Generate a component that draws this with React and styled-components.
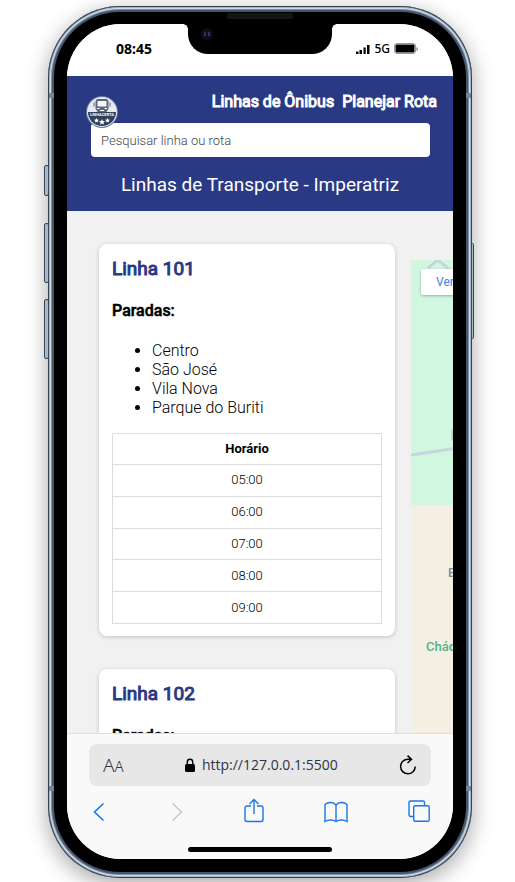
import React from 'react';
import styled, { createGlobalStyle } from 'styled-components';

const GlobalStyle = createGlobalStyle`
  *, *::before, *::after { box-sizing: border-box; }
  body {
    margin: 0;
    background: #fff;
    font-family: Roboto, "Liberation Sans", sans-serif;
    color: #000;
  }
`;

const Stage = styled.div`
  display: flex;
  height: 100vh;
  min-height: 600px;
  padding: 6px 43px 4px 48px;
  overflow: hidden;
`;

const Phone = styled.div`
  position: relative;
  flex: 1;
  display: flex;
  min-width: 0;
  padding: 18px 19px 19px;
  border-radius: 72px;
  background: #000;
  box-shadow:
    inset 0 0 0 1px #343f4c,
    inset 0 0 0 2px #a9b8c8,
    inset 0 0 0 3px #d0dceb,
    inset 0 0 0 4px #7d8ea1,
    inset 0 0 0 6px #45556a,
    0 6px 20px 2px rgba(0, 0, 0, 0.3);
`;

const SideButton = styled.span`
  position: absolute;
  ${({ $side }) => $side}: ${({ $side }) => ($side === 'left' ? '-4px' : '-2px')};
  top: ${({ $top }) => $top}px;
  width: ${({ $side }) => ($side === 'left' ? 5 : 3)}px;
  height: ${({ $length }) => $length}px;
  border: 1px solid #3b4654;
  border-radius: 2px;
  background: #a9b9ca;
`;

const AntennaBand = styled.span`
  position: absolute;
  ${({ $side }) => $side}: 1px;
  ${({ $edge }) => $edge}: 87px;
  width: 5px;
  height: 5px;
  background: #76859f;
`;

const Speaker = styled.span`
  position: absolute;
  top: 7px;
  left: 50%;
  width: 66px;
  height: 6px;
  margin-left: -33px;
  border-radius: 3px;
  background: #151515;
`;

const Notch = styled.div`
  position: absolute;
  top: 17px;
  left: 50%;
  width: 144px;
  height: 31px;
  margin-left: -72px;
  border-radius: 0 0 20px 20px;
  background: #000;

  &::before, &::after {
    content: "";
    position: absolute;
    top: 1px;
    width: 4px;
    height: 4px;
  }
  &::before {
    left: -4px;
    background: radial-gradient(circle at 0 100%, transparent 3px, #000 4px);
  }
  &::after {
    right: -4px;
    background: radial-gradient(circle at 100% 100%, transparent 3px, #000 4px);
  }
`;

const Camera = styled.svg`
  position: absolute;
  top: 3px;
  left: 11px;
`;

const Screen = styled.div`
  flex: 1;
  display: flex;
  flex-direction: column;
  min-width: 0;
  overflow: hidden;
  border-radius: 54px;
  background: #f1f1f1;
`;

const StatusBar = styled.div`
  display: flex;
  justify-content: space-between;
  align-items: center;
  flex: none;
  height: 52px;
  padding: 0 35px 2px 49px;
  background: #fff;
  font-family: "Noto Sans", "Open Sans", sans-serif;
`;

const Clock = styled.time`
  font-size: 14px;
  font-weight: 700;
  line-height: 20px;
`;

const Signal = styled.div`
  display: flex;
  align-items: center;
  gap: 4px;
  font-size: 12px;
  font-weight: 500;
  line-height: 20px;
`;

const SiteHeader = styled.header`
  flex: none;
  padding-top: 16px;
  padding-bottom: 14px;
  background: #2a3984;
  color: #fff;
`;

const HeaderRow = styled.div`
  display: flex;
  justify-content: space-between;
  align-items: flex-start;
  padding: 0 16px 0 19px;
`;

const Logo = styled.svg`
  position: relative;
  z-index: 1;
  flex: none;
  margin: 4px 0 -5px;
`;

const MainNav = styled.nav`
  display: flex;
  gap: 8px;
`;

const NavLink = styled.a`
  color: #fff;
  font-size: 16px;
  font-weight: 400;
  line-height: 20px;
  text-decoration: none;
  white-space: nowrap;
  -webkit-text-stroke: 1px #fff;
`;

const SearchForm = styled.form`
  display: flex;
  padding: 0 23px 0 24px;
`;

const SearchInput = styled.input`
  flex: 1;
  min-width: 0;
  height: 34px;
  padding: 0 10px;
  border: 0;
  border-radius: 4px;
  background: #fff;
  font: 300 13px Roboto, sans-serif;

  &::placeholder { color: #444; opacity: 1; }
`;

const PageTitle = styled.h1`
  margin: 16px 0 0;
  font-size: 19px;
  font-weight: 400;
  line-height: 24px;
  text-align: center;
`;

const Content = styled.main`
  flex: 1;
  display: flex;
  gap: 16px;
  min-height: 0;
  padding: 33px 0 0 32px;
  overflow: hidden;
`;

const LineList = styled.div`
  flex: none;
  width: calc(100% - 58px);
  display: flex;
  flex-direction: column;
  gap: 33px;
`;

const Card = styled.section`
  flex: none;
  padding: 13px 13px 12px;
  border-radius: 8px;
  background: #fff;
  box-shadow: 0 1px 4px rgba(0, 0, 0, 0.2);
`;

const LineName = styled.h2`
  margin: 0;
  color: #2a3984;
  font-size: 19px;
  font-weight: 400;
  line-height: 24px;
  -webkit-text-stroke: 1px #2a3984;
`;

const StopsTitle = styled.h3`
  margin: 20px 0 0;
  font-size: 16px;
  font-weight: 500;
  line-height: 20px;
  -webkit-text-stroke: 0.5px #000;
`;

const Stops = styled.ul`
  margin: 20px 0 16px;
  padding-left: 40px;
  font-size: 16px;
  font-weight: 300;
  line-height: 19px;
`;

const Schedule = styled.table`
  width: 100%;
  height: 191px;
  border-collapse: collapse;
  font-size: 13px;

  th, td {
    padding: 7px;
    border: 1px solid #ddd;
    line-height: 16px;
    text-align: center;
  }
  td { font-weight: 300; }
`;

const MapPanel = styled.aside`
  position: relative;
  flex: none;
  width: 296px;
  height: 600px;
  margin-top: 16px;
  overflow: hidden;
  background: #f3efe3;
`;

const MapDrawing = styled.svg`
  display: block;
`;

const MapLink = styled.a`
  position: absolute;
  top: 9px;
  left: 10px;
  padding: 3px 15px;
  border-radius: 2px;
  background: #fff;
  box-shadow: 0 1px 3px rgba(0, 0, 0, 0.3);
  color: #3b82e8;
  font-size: 12px;
  line-height: 20px;
  text-decoration: none;
  white-space: nowrap;
`;

const BrowserBar = styled.footer`
  flex: none;
  padding: 10px 22px 7px;
  border-top: 1px solid #dedede;
  background: #f9f9f9;
`;

const AddressBar = styled.div`
  display: flex;
  justify-content: space-between;
  align-items: center;
  height: 42px;
  padding: 0 14px;
  border-radius: 8px;
  background: #e7e7e7;
  color: #2d3442;
  font-family: "Open Sans", "Noto Sans", sans-serif;
  font-weight: 400;
`;

const IconButton = styled.button`
  display: flex;
  align-items: center;
  padding: 0;
  border: 0;
  background: none;
  color: inherit;
  font: inherit;
  cursor: pointer;
`;

const ChevronButton = styled(IconButton)`
  width: 18px;
`;

const TextSize = styled(IconButton)`
  align-items: baseline;
  font-family: "Noto Sans", "Open Sans", sans-serif;
  font-size: 19px;
  font-weight: 300;
  small { font-size: 15px; }
`;

const Address = styled.div`
  display: flex;
  align-items: center;
  gap: 7px;
  font-size: 14px;
  font-weight: 400;
  line-height: 20px;
`;

const Toolbar = styled.nav`
  display: flex;
  justify-content: space-between;
  align-items: center;
  height: 28px;
  margin-top: 12px;
  padding: 0 1px 0 4px;
  color: #1877e6;
`;

const HomeIndicator = styled.div`
  width: 144px;
  height: 5px;
  margin: 21px auto 0;
  border-radius: 3px;
  background: #000;
`;

const LINES = [
  {
    name: 'Linha 101',
    stops: ['Centro', 'São José', 'Vila Nova', 'Parque do Buriti'],
    times: ['05:00', '06:00', '07:00', '08:00', '09:00'],
  },
  { name: 'Linha 102', stops: [], times: [] },
];

const BusLogo = () => (
  <Logo width="32" height="32" viewBox="0 0 32 32" role="img" aria-label="Linha Certa">
    <defs>
      <clipPath id="logo-disc"><circle cx="16" cy="16" r="14" /></clipPath>
    </defs>
    <circle cx="16" cy="16" r="16" fill="#6d7a9f" />
    <circle cx="16" cy="16" r="15" fill="#e6eaf1" />
    <path clipPath="url(#logo-disc)" d="M0 16h32v16H0z" fill="#33415f" />
    <path d="M11 3h10l1.500 2v7.500L20.500 16h-9l-2-3.500V5z" fill="#5a6680" />
    <path d="M11.500 5h9v5.500h-9z" fill="#f2f4f8" />
    <path d="M11 12.500h2.500M18.500 12.500H21M14 14.500h4" stroke="#fff" strokeWidth="1" />
    <path d="M8 6.500v4M24 6.500v4" stroke="#5a6680" strokeWidth="1" />
    <text x="16" y="20" fill="#fff" fontSize="4" fontWeight="700" textAnchor="middle" fontFamily="Roboto, sans-serif">LINHACERTA</text>
    <g fill="#fff">
      <path d="M16 23l.9 1.900 2.100.2-1.500 1.400.4 2.100-1.900-1.100-1.900 1.100.4-2.100-1.500-1.400 2.100-.2z" />
      <path d="M10.500 22l.7 1.500 1.700.2-1.200 1.200.3 1.600-1.500-.8-1.500.8.3-1.600-1.200-1.200 1.700-.2z" />
      <path d="M21.500 22l.7 1.500 1.700.2-1.200 1.200.3 1.600-1.500-.8-1.500.8.3-1.600-1.200-1.200 1.700-.2z" />
    </g>
  </Logo>
);

const SignalIcon = () => (
  <svg width="14" height="11" viewBox="0 0 14 11" aria-hidden="true">
    <path d="M0 7.500h2.500V10H0zM3.500 6H6v4H3.500zM7.500 3.500h2.200V10H7.500zM11 1h2.500v9H11z" />
  </svg>
);

const BatteryIcon = () => (
  <svg width="24" height="12" viewBox="0 0 24 12" aria-hidden="true">
    <rect x=".5" y=".5" width="21" height="10" rx="2.500" fill="#fff" stroke="#999" />
    <rect x="1.500" y="1.500" width="19" height="8" rx="1" />
    <path d="M22.500 4v4l1.200-1V5z" fill="#777" />
  </svg>
);

const LockIcon = () => (
  <svg width="10" height="14" viewBox="0 0 10 14" aria-hidden="true">
    <rect y="6" width="10" height="8" rx="1.500" fill="#000" />
    <path d="M2.300 6.500V4a2.700 2.700 0 0 1 5.400 0v2.500" fill="none" stroke="#000" strokeWidth="1.400" />
  </svg>
);

const ReloadIcon = () => (
  <svg width="18" height="20" viewBox="0 0 18 20" fill="none" stroke="#000" strokeWidth="1.500" aria-hidden="true">
    <path d="M16.200 11.500A7.300 7.300 0 1 1 9 4.200h3M8.500 0.600l4 3.700-4 3.700" />
  </svg>
);

const ChevronIcon = ({ forward }) => (
  <svg width="12" height="20" viewBox="0 0 12 20" fill="none" stroke={forward ? '#c7c9cc' : 'currentColor'} strokeWidth="1.600" aria-hidden="true">
    <path d={forward ? 'M1.500 1.500 10.500 10l-9 8.500' : 'M10.500 1.500 1.500 10l9 8.500'} />
  </svg>
);

const ShareIcon = () => (
  <svg width="20" height="28" viewBox="0 0 20 28" fill="none" stroke="currentColor" strokeWidth="1.400" aria-hidden="true">
    <path d="M7 8H3a2 2 0 0 0-2 2v11.500a2 2 0 0 0 2 2h14a2 2 0 0 0 2-2V10a2 2 0 0 0-2-2h-4M10 16V1.500M5.500 6 10 1.500 14.500 6" />
  </svg>
);

const BookIcon = () => (
  <svg width="24" height="22" viewBox="0 0 24 22" fill="none" stroke="currentColor" strokeWidth="1.400" aria-hidden="true">
    <path d="M12 4v16.500M12 4C9.500.8 4 .8 1 3.500v17c3-2 8-2 11 0 3-2 8-2 11 0v-17C20 .8 14.500.8 12 4z" />
  </svg>
);

const TabsIcon = () => (
  <svg width="22" height="24" viewBox="0 0 22 24" fill="none" stroke="currentColor" strokeWidth="1.400" aria-hidden="true">
    <path d="M5.500 16.500h-3A1.500 1.500 0 0 1 1 15V2.500A1.500 1.500 0 0 1 2.500 1H15a1.500 1.500 0 0 1 1.500 1.500v3" />
    <rect x="5.700" y="5.700" width="15.500" height="15.500" rx="1.500" />
  </svg>
);

const LineCard = ({ line }) => (
  <Card>
    <LineName>{line.name}</LineName>
    <StopsTitle>Paradas:</StopsTitle>
    {line.stops.length > 0 && (
      <Stops>{line.stops.map((stop) => <li key={stop}>{stop}</li>)}</Stops>
    )}
    {line.times.length > 0 && (
      <Schedule>
        <thead><tr><th scope="col">Horário</th></tr></thead>
        <tbody>{line.times.map((time) => <tr key={time}><td>{time}</td></tr>)}</tbody>
      </Schedule>
    )}
  </Card>
);

const StreetMap = () => (
  <MapPanel aria-label="Mapa">
    <MapDrawing width="296" height="600" viewBox="0 0 296 600" aria-hidden="true">
      <path d="M0 0h296v245H0z" fill="#d2f7e0" />
      <path d="M17 8 27 0 46 16M0 195l60-9" fill="none" stroke="#c9d5de" strokeWidth="3" />
      <rect x="41" y="170" width="10" height="10" rx="1" fill="none" stroke="#a6b5bd" />
      <g fontFamily="Roboto, sans-serif" fontSize="13" fontWeight="500">
        <text x="37" y="317" fill="#7e8e9c">B</text>
        <text x="15" y="391" fill="#58ae91">Chác</text>
      </g>
    </MapDrawing>
    <MapLink href="#mapa">Ver</MapLink>
  </MapPanel>
);

export default function App() {
  return (
    <>
      <GlobalStyle />
      <Stage>
        <Phone>
          <SideButton $side="left" $top={159} $length={31} />
          <SideButton $side="left" $top={217} $length={60} />
          <SideButton $side="left" $top={293} $length={60} />
          <SideButton $side="right" $top={237} $length={96} />
          <AntennaBand $side="left" $edge="top" />
          <AntennaBand $side="right" $edge="top" />
          <AntennaBand $side="left" $edge="bottom" />
          <AntennaBand $side="right" $edge="bottom" />
          <Screen>
            <StatusBar>
              <Clock>08:45</Clock>
              <Signal><SignalIcon />5G<BatteryIcon /></Signal>
            </StatusBar>
            <SiteHeader>
              <HeaderRow>
                <BusLogo />
                <MainNav>
                  <NavLink href="#linhas">Linhas de Ônibus</NavLink>
                  <NavLink href="#rota">Planejar Rota</NavLink>
                </MainNav>
              </HeaderRow>
              <SearchForm role="search">
                <SearchInput type="text" placeholder="Pesquisar linha ou rota" aria-label="Pesquisar linha ou rota" />
              </SearchForm>
              <PageTitle>Linhas de Transporte - Imperatriz</PageTitle>
            </SiteHeader>
            <Content>
              <LineList>{LINES.map((line) => <LineCard key={line.name} line={line} />)}</LineList>
              <StreetMap />
            </Content>
            <BrowserBar>
              <AddressBar>
                <TextSize type="button">A<small>A</small></TextSize>
                <Address><LockIcon />http://127.0.0.1:5500</Address>
                <IconButton type="button" aria-label="Recarregar"><ReloadIcon /></IconButton>
              </AddressBar>
              <Toolbar>
                <ChevronButton type="button" aria-label="Voltar"><ChevronIcon /></ChevronButton>
                <IconButton type="button" aria-label="Avançar"><ChevronIcon forward /></IconButton>
                <IconButton type="button" aria-label="Compartilhar"><ShareIcon /></IconButton>
                <IconButton type="button" aria-label="Favoritos"><BookIcon /></IconButton>
                <IconButton type="button" aria-label="Abas"><TabsIcon /></IconButton>
              </Toolbar>
              <HomeIndicator />
            </BrowserBar>
          </Screen>
          <Speaker />
          <Notch>
            <Camera width="16" height="16" viewBox="0 0 16 16" aria-hidden="true">
              <circle cx="8" cy="8" r="6" fill="#0c0f16" />
              <path d="M6 6v4M10 6v4" stroke="#26345f" strokeWidth="2" />
            </Camera>
          </Notch>
        </Phone>
      </Stage>
    </>
  );
}
